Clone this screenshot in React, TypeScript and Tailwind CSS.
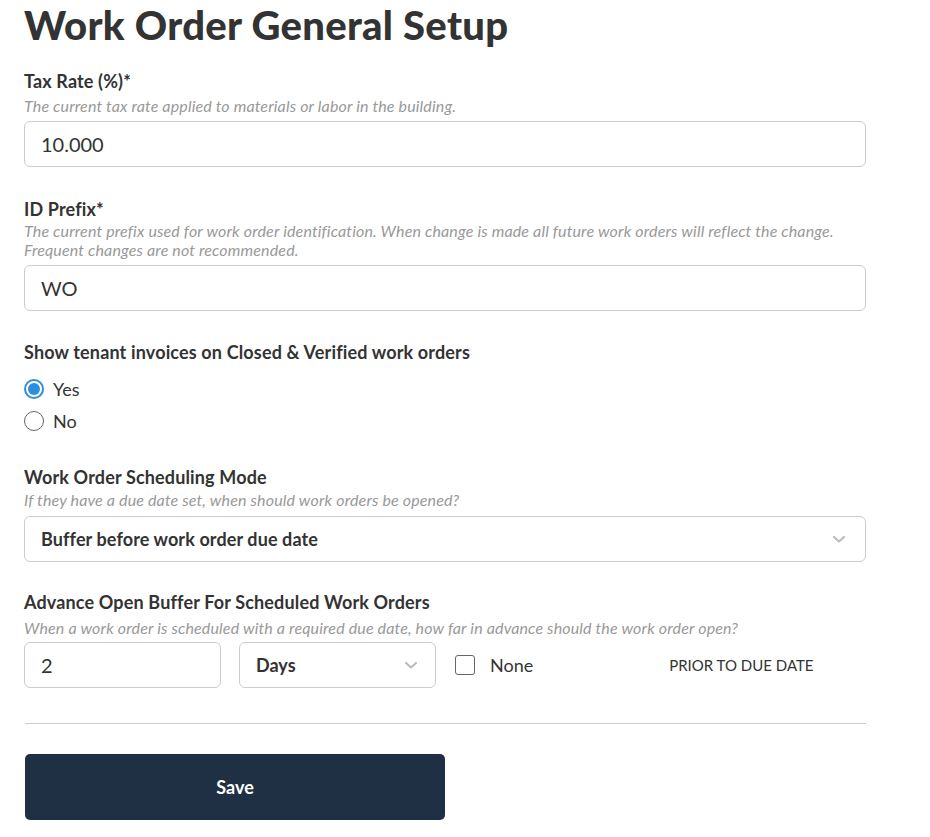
import React, { useState } from "react";

const font = { fontFamily: "Lato, 'Open Sans', sans-serif" };

function ChevronDown({ className }: { className?: string }) {
  return (
    <svg viewBox="0 0 16 16" className={className} fill="none" stroke="currentColor" strokeWidth="2.2" strokeLinecap="round" strokeLinejoin="round">
      <path d="M3 6l5 4.5L13 6" />
    </svg>
  );
}

function Label({ children }: { children: React.ReactNode }) {
  return <p className="text-[18px] font-bold text-[#333] leading-6 tracking-[0.15px]">{children}</p>;
}

function Hint({ children }: { children: React.ReactNode }) {
  return <p className="text-[16px] italic text-[#999] leading-[19px] tracking-[0.15px]">{children}</p>;
}

export default function App() {
  const [show, setShow] = useState("yes");
  const [none, setNone] = useState(false);

  return (
    <div style={font} className="bg-white min-h-[837px] w-[930px] pl-6 text-[#333]">
      <div className="w-[842px]">
        <h1 className="text-[40px] font-black leading-[48px] tracking-[0.3px] text-[#333] pt-[1px]">
          Work Order General Setup
        </h1>

        <div className="mt-[20px]">
          <Label>Tax Rate (%)*</Label>
          <div className="mt-[3px]">
            <Hint>The current tax rate applied to materials or labor in the building.</Hint>
          </div>
          <input
            defaultValue="10.000"
            className="mt-[6px] w-full h-[46px] rounded-md border border-[#ccc] px-4 text-[20px] text-[#333] outline-none"
          />
        </div>

        <div className="mt-[30px]">
          <Label>ID Prefix*</Label>
          <Hint>
            The current prefix used for work order identification. When change is made all future work orders will reflect the change.
            <br />
            Frequent changes are not recommended.
          </Hint>
          <input
            defaultValue="WO"
            className="mt-[6px] w-full h-[46px] rounded-md border border-[#ccc] px-4 text-[20px] text-[#333] outline-none"
          />
        </div>

        <div className="mt-[29px]">
          <Label>Show tenant invoices on Closed &amp; Verified work orders</Label>
          <div className="mt-[15px] flex flex-col gap-[12px]">
            {[
              { v: "yes", l: "Yes" },
              { v: "no", l: "No" },
            ].map((o) => (
              <label key={o.v} className="flex items-center gap-[9px] cursor-pointer h-5" onClick={() => setShow(o.v)}>
                {show === o.v ? (
                  <span className="w-5 h-5 rounded-full border-2 border-[#2a90db] flex items-center justify-center">
                    <span className="w-3 h-3 rounded-full bg-[#2a90db]" />
                  </span>
                ) : (
                  <span className="w-5 h-5 rounded-full border-[1.5px] border-[#666]" />
                )}
                <span className="text-[18px] text-[#333]">{o.l}</span>
              </label>
            ))}
          </div>
        </div>

        <div className="mt-[34px]">
          <Label>Work Order Scheduling Mode</Label>
          <div className="mt-[1px]">
            <Hint>If they have a due date set, when should work orders be opened?</Hint>
          </div>
          <div className="mt-[7px] w-full h-[46px] rounded-md border border-[#ccc] px-4 flex items-center justify-between">
            <span className="text-[18px] font-bold text-[#333] tracking-[0.1px]">Buffer before work order due date</span>
            <ChevronDown className="w-4 h-4 text-[#bbb] mr-[2px]" />
          </div>
        </div>

        <div className="mt-[28px]">
          <Label>Advance Open Buffer For Scheduled Work Orders</Label>
          <div className="mt-[4px]">
            <Hint>When a work order is scheduled with a required due date, how far in advance should the work order open?</Hint>
          </div>
          <div className="mt-[5px] flex items-center">
            <input
              defaultValue="2"
              className="w-[197px] h-[46px] rounded-md border border-[#ccc] px-4 text-[20px] text-[#333] outline-none"
            />
            <div className="ml-[18px] w-[197px] h-[46px] rounded-md border border-[#ccc] px-4 flex items-center justify-between">
              <span className="text-[18px] font-bold text-[#333]">Days</span>
              <ChevronDown className="w-4 h-4 text-[#bbb]" />
            </div>
            <label className="ml-[19px] flex items-center gap-[15px] cursor-pointer" onClick={() => setNone(!none)}>
              <span className="w-5 h-5 rounded-[3px] border-[1.5px] border-[#666] bg-white" />
              <span className="text-[18px] text-[#333]">None</span>
            </label>
            <span className="ml-[136px] text-[15px] uppercase text-[#333]">Prior to due date</span>
          </div>
        </div>

        <hr className="mt-[35px] border-t border-[#ccc] ml-[1px]" />

        <button className="mt-[30px] ml-[1px] w-[420px] h-[66px] rounded-[5px] bg-[#1f3045] text-white text-[18px] font-bold">
          Save
        </button>
      </div>
    </div>
  );
}
